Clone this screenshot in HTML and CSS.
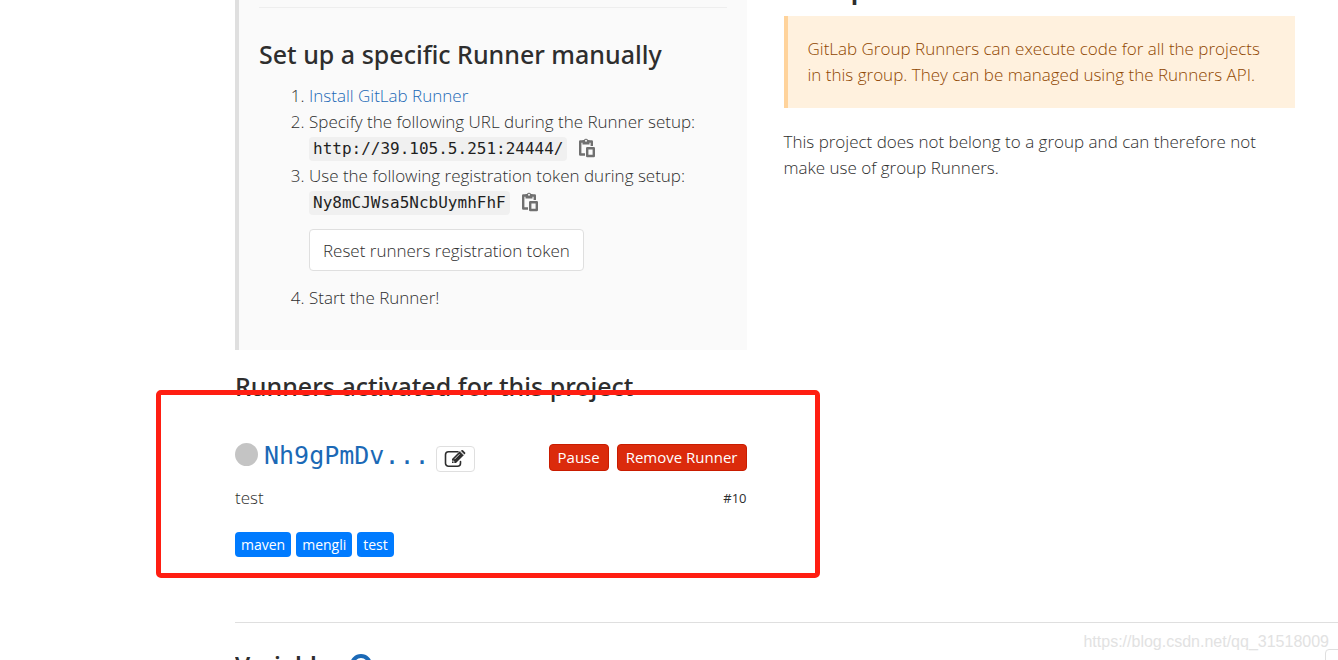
FILE: index.html
```html
<!DOCTYPE html>
<html lang="en">
<head>
  <meta charset="UTF-8">
  <meta name="viewport" content="width=device-width, initial-scale=1.0">
  <title>CI / CD Settings</title>
  <link rel="stylesheet" href="styles.css">
</head>
<body>
  <main class="page">
    <div class="columns">
      <!-- Specific runners -->
      <div class="column">
        <div class="setup">
          <hr class="divider">
          <h4 class="title">Set up a specific Runner manually</h4>
          <ol class="steps">
            <li><a href="#">Install GitLab Runner</a></li>
            <li>
              Specify the following URL during the Runner setup:
              <div class="code-row">
                <code>http://39.105.5.251:24444/</code>
                <button type="button" class="copy-btn">
                  <svg viewBox="0 0 16 20" width="16" height="20">
                    <path d="M6 16.500H1.200V3.500H12.800V8" fill="none" stroke="#707070" stroke-width="2.400" stroke-linejoin="round"/>
                    <path d="M3.500 2H5a2.200 2.200 0 0 1 4 0h1.500v4.500h-7z" fill="#707070"/>
                    <circle cx="7" cy="2.800" r="1" fill="#fafafa"/>
                    <rect x="8.200" y="10.200" width="6.600" height="7.800" fill="#fafafa" stroke="#707070" stroke-width="2.400" stroke-linejoin="round"/>
                  </svg>
                </button>
              </div>
            </li>
            <li>
              Use the following registration token during setup:
              <div class="code-row">
                <code>Ny8mCJWsa5NcbUymhFhF</code>
                <button type="button" class="copy-btn">
                  <svg viewBox="0 0 16 20" width="16" height="20">
                    <path d="M6 16.500H1.200V3.500H12.800V8" fill="none" stroke="#707070" stroke-width="2.400" stroke-linejoin="round"/>
                    <path d="M3.500 2H5a2.200 2.200 0 0 1 4 0h1.500v4.500h-7z" fill="#707070"/>
                    <circle cx="7" cy="2.800" r="1" fill="#fafafa"/>
                    <rect x="8.200" y="10.200" width="6.600" height="7.800" fill="#fafafa" stroke="#707070" stroke-width="2.400" stroke-linejoin="round"/>
                  </svg>
                </button>
              </div>
              <button type="button" class="btn btn-reset">Reset runners registration token</button>
            </li>
            <li>Start the Runner!</li>
          </ol>
        </div>

        <!-- Activated runners -->
        <div class="activated">
          <h4 class="title">Runners activated for this project</h4>
          <div class="runner">
            <div class="runner-head">
              <span class="status"></span>
              <a href="#" class="runner-token">Nh9gPmDv...</a>
              <button type="button" class="btn btn-edit">
                <svg viewBox="0 0 22 18" width="22" height="18">
                  <path d="M14 1.800H4.500A3 3 0 0 0 1.500 4.800v8.400a3 3 0 0 0 3 3h9a3 3 0 0 0 3-3V11.500" fill="none" stroke="#2e2e2e" stroke-width="1.600" stroke-linecap="round"/>
                  <path d="M8 9L16 1l4 4-8 8H8z" fill="#2e2e2e"/>
                  <path d="M16.800 .8l.8-.6q.7-.4 1.400.1l2.100 2.100q.6.700 0 1.400l-.6.700z" fill="#2e2e2e"/>
                  <path d="M10.500 9.200l5-5M9 10.300v1.700h1.700M16 1.300l3.800 3.800" fill="none" stroke="#fff" stroke-width=".8"/>
                </svg>
              </button>
              <div class="actions">
                <button type="button" class="btn btn-danger">Pause</button>
                <button type="button" class="btn btn-danger">Remove Runner</button>
              </div>
            </div>
            <div class="runner-info">
              <span>test</span>
              <small>#10</small>
            </div>
            <div class="tags">
              <span class="tag">maven</span>
              <span class="tag">mengli</span>
              <span class="tag">test</span>
            </div>
          </div>
          <div class="highlight"></div>
        </div>
      </div>

      <!-- Group runners -->
      <div class="column">
        <h4 class="title title-group">Group Runners</h4>
        <div class="callout">GitLab Group Runners can execute code for all the projects in this group. They can be managed using the Runners API.</div>
        <p class="note">This project does not belong to a group and can therefore not make use of group Runners.</p>
      </div>
    </div>

    <section class="variables">
      <h4 class="title">Variables</h4>
      <svg class="help" viewBox="0 0 22 22" width="22" height="22">
        <circle cx="11" cy="11" r="9" fill="none" stroke="#1b69b6" stroke-width="4"/>
      </svg>
      <button type="button" class="btn btn-expand"></button>
    </section>
  </main>
  <div class="watermark">https://blog.csdn.net/qq_31518009</div>
</body>
</html>
```
FILE: styles.css
```css
* {
  box-sizing: border-box;
}

body {
  position: relative;
  height: 100vh;
  margin: 0;
  overflow: hidden;
  background: #fff;
  color: #2e2e2e;
  font-family: "Open Sans", "Noto Sans", sans-serif;
  font-size: 17px;
  font-weight: 350;
  line-height: 26px;
}

a {
  color: #1b69b6;
  text-decoration: none;
}

.page {
  padding-left: 235px;
}

.columns {
  display: grid;
  grid-template-columns: 1fr 1fr;
  gap: 37px;
  margin-right: 43px;
}

.column {
  min-width: 0;
}

.title {
  margin: 0;
  font-family: "Noto Sans", sans-serif;
  font-size: 25px;
  font-weight: 500;
  line-height: 32px;
}

/* Setup panel */
.setup {
  padding: 7px 20px 39px;
  border-left: 4px solid #dfdfdf;
  background: #fafafa;
}

.divider {
  height: 1px;
  margin: 0 0 30px;
  border: 0;
  background: #eee;
}

.steps {
  margin: 13px 0 0;
  padding-left: 50px;
}

.code-row {
  display: flex;
  align-items: center;
  gap: 12px;
  height: 28px;
}

code {
  padding: 0 4px;
  border-radius: 4px;
  background: #f0f0f0;
  color: #1f1f1f;
  font-family: "DejaVu Sans Mono", monospace;
  font-size: 16px;
  font-weight: 400;
  line-height: 24px;
}

.copy-btn {
  display: flex;
  padding: 0 0 2px;
  border: 0;
  background: none;
}

/* Buttons */
.btn {
  border: 1px solid #dfdfdf;
  border-radius: 4px;
  background: #fff;
  color: #2e2e2e;
  font-family: inherit;
  white-space: nowrap;
}

.btn-reset {
  display: block;
  height: 42px;
  margin: 12px 0 14px;
  padding: 0 13px;
  font-size: 17px;
  font-weight: 350;
}

.btn-edit {
  display: flex;
  align-items: center;
  justify-content: center;
  width: 39px;
  height: 26px;
  margin-top: 6px;
  padding: 0;
}

.btn-danger {
  height: 27px;
  padding: 0 8px;
  border-color: #c91c00;
  background: #db2b0c;
  color: #fff;
  font-size: 15px;
  font-weight: 400;
}

/* Runner */
.activated {
  position: relative;
  padding-top: 20px;
}

.runner {
  padding-top: 38px;
}

.runner-head {
  display: flex;
  align-items: center;
  gap: 6px;
  height: 32px;
}

.status {
  width: 23px;
  height: 23px;
  margin-bottom: 3px;
  border-radius: 50%;
  background: #c4c4c4;
}

.runner-token {
  font-family: "DejaVu Sans Mono", monospace;
  font-size: 25px;
  font-weight: 400;
  line-height: 32px;
}

.actions {
  display: flex;
  gap: 8px;
  margin: 2px 0 0 auto;
}

.runner-info {
  display: flex;
  align-items: center;
  justify-content: space-between;
  margin-top: 13px;
}

.runner-info small {
  font-size: 13px;
  font-weight: 400;
}

.tags {
  display: flex;
  gap: 5px;
  margin-top: 21px;
}

.tag {
  padding: 0 6px;
  border-radius: 4px;
  background: #007bff;
  color: #fff;
  font-size: 14px;
  font-weight: 400;
  line-height: 25px;
}

.highlight {
  position: absolute;
  top: 40px;
  right: -73px;
  bottom: -21px;
  left: -79px;
  border: 5px solid #ff1e12;
  border-radius: 5px;
}

/* Group runners */
.title-group {
  margin: -29px 0 13px;
  font-size: 28px;
  font-weight: 600;
}

.callout {
  padding: 20px;
  border-left: 4px solid #ffd39b;
  background: #fff1de;
  color: #8f4700;
}

.note {
  margin: 21px 0 0;
}

/* Variables */
.variables {
  display: flex;
  gap: 7px;
  margin-top: 65px;
  padding-top: 26px;
  overflow: hidden;
  border-top: 1px solid #dfdfdf;
}

.variables .title {
  font-size: 24px;
  font-weight: 600;
}

.help {
  margin-top: 5px;
}

.btn-expand {
  width: 80px;
  height: 40px;
  margin: 0 -67px 0 auto;
}

.watermark {
  position: absolute;
  right: 9px;
  bottom: 5px;
  color: #e2e2e2;
  font-family: "Liberation Sans", Arial, sans-serif;
  font-size: 16px;
  font-weight: 400;
}
```
